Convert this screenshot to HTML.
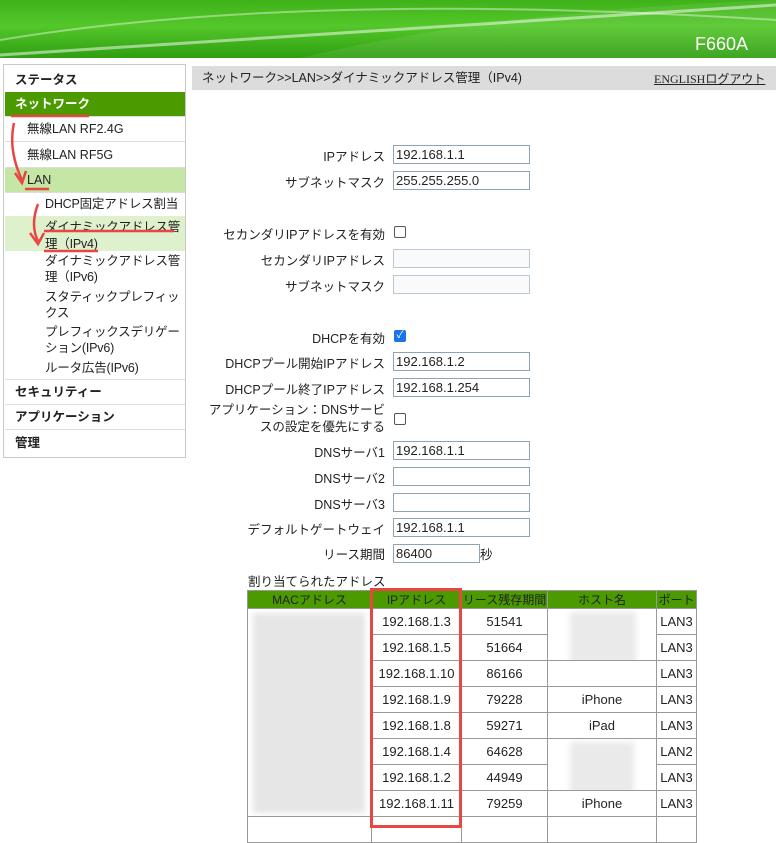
<!DOCTYPE html><html><head><meta charset="utf-8"><style>
*{margin:0;padding:0;box-sizing:border-box}
body{width:776px;height:819px;overflow:hidden;background:#fff;font-family:"Liberation Sans","Noto Sans CJK JP",sans-serif;font-size:12.5px;color:#222;position:relative}
.a{position:absolute}
.hdr{left:0;top:0;width:776px;height:58px;background:linear-gradient(180deg,#3fb21a 0%,#54c72a 45%,#2e9e10 100%)}
.side{left:3px;top:64px;width:183px;height:394px;border:1px solid #c8c8c8;background:#fff}
.it{position:absolute;left:1px;width:180px;border-bottom:1px solid #ddd;padding-left:10px;line-height:24px;white-space:nowrap}
.sub{position:absolute;left:41px;line-height:16px;white-space:nowrap;font-size:12.5px;letter-spacing:-0.2px}
.lbl{position:absolute;right:391px;text-align:right;white-space:nowrap}
.in{position:absolute;left:393px;width:137px;height:19px;border:1px solid #8fa3b5;padding-left:2px;line-height:17px;font-size:13px}
.cb{position:absolute;left:394px;width:12px;height:12px;border:1px solid #555;border-radius:2px}
table{position:absolute;left:247px;top:590px;border-collapse:collapse;font-size:13px;table-layout:fixed;width:449px}
td,th{border:1px solid #999;text-align:center;height:26px;padding:0;white-space:nowrap;overflow:hidden}
th{background:#4a9a00;height:18px;font-weight:normal;color:#222;font-size:12px;line-height:16px}
.bl{background:#eaeaea;filter:blur(3px)}
</style></head><body>
<div class="a hdr"><svg width="776" height="58" style="position:absolute;left:0;top:0"><path d="M0 40 Q300 -10 776 20" stroke="rgba(255,255,255,.4)" stroke-width="2" fill="none"/><path d="M0 55 Q400 30 776 5" stroke="rgba(255,255,255,.5)" stroke-width="3" fill="none"/><path d="M300 58 Q500 10 776 0 L776 58Z" fill="rgba(255,255,255,.08)"/></svg>
<div class="a" style="left:695px;top:34px;color:#fff;font-size:18px">F660A</div></div>
<div class="a side">
<div class="it" style="top:3px;font-weight:bold">ステータス</div>
<div class="it" style="top:27px;height:25px;background:#4a9a00;color:#fff;font-weight:bold">ネットワーク</div>
<div class="it" style="top:52px;padding-left:22px">無線LAN RF2.4G</div>
<div class="it" style="top:78px;padding-left:22px">無線LAN RF5G</div>
<div class="it" style="top:103px;background:#c6e6a6;padding-left:22px">LAN</div>
<div class="sub" style="top:131px">DHCP固定アドレス割当</div>
<div class="a" style="left:1px;top:151px;width:180px;height:35px;background:#dff0cc"></div>
<div class="sub" style="top:154px;line-height:17px">ダイナミックアドレス管<br>理（IPv4)</div>
<div class="sub" style="top:188px">ダイナミックアドレス管<br>理（IPv6)</div>
<div class="sub" style="top:224px">スタティックプレフィッ<br>クス</div>
<div class="sub" style="top:259px">プレフィックスデリゲー<br>ション(IPv6)</div>
<div class="sub" style="top:295px">ルータ広告(IPv6)</div>
<div class="it" style="top:314px;border-top:1px solid #ddd;font-weight:bold">セキュリティー</div>
<div class="it" style="top:340px;font-weight:bold">アプリケーション</div>
<div class="it" style="top:366px;font-weight:bold;border:none">管理</div>
</div>
<svg class="a" style="left:0;top:0" width="200" height="260"><g stroke="#e84545" stroke-width="2.5" fill="none"><path d="M11 116H89"/><path d="M25 189H49"/><path d="M44 231H174"/><path d="M44 251H98"/><path d="M14 123Q8 150 22 180"/><path d="M15 173L22 183L26 171"/><path d="M38 204Q30 225 38 241"/><path d="M30 233L38 244L44 233"/></g></svg>
<div class="a" style="left:192px;top:66px;width:584px;height:24px;background:#dcdcdc;line-height:24px;padding-left:10px">ネットワーク&gt;&gt;LAN&gt;&gt;ダイナミックアドレス管理（IPv4)</div>
<div class="a" style="left:654px;top:70px;font-family:'Liberation Serif',serif;font-size:12px;text-decoration:underline">ENGLISH<span style="font-family:'Liberation Sans','Noto Sans CJK JP',sans-serif">ログアウト</span></div>
<div class="lbl" style="top:146px">IPアドレス</div><div class="in" style="top:145px">192.168.1.1</div>
<div class="lbl" style="top:172px">サブネットマスク</div><div class="in" style="top:171px">255.255.255.0</div>
<div class="lbl" style="top:224px">セカンダリIPアドレスを有効</div><div class="cb" style="top:226px"></div>
<div class="lbl" style="top:250px">セカンダリIPアドレス</div><div class="in" style="top:249px;background:#fafafa;border-color:#b8c8d8"></div>
<div class="lbl" style="top:276px">サブネットマスク</div><div class="in" style="top:275px;background:#fafafa;border-color:#b8c8d8"></div>
<div class="lbl" style="top:328px">DHCPを有効</div><div class="cb" style="top:330px;background:#1a73e8;border-color:#1a73e8;color:#fff;font-size:10px;line-height:10px;text-align:center">✓</div>
<div class="lbl" style="top:353px">DHCPプール開始IPアドレス</div><div class="in" style="top:352px">192.168.1.2</div>
<div class="lbl" style="top:379px">DHCPプール終了IPアドレス</div><div class="in" style="top:378px">192.168.1.254</div>
<div class="lbl" style="top:402px;line-height:17px">アプリケーション：DNSサービ<br>スの設定を優先にする</div><div class="cb" style="top:413px"></div>
<div class="lbl" style="top:442px">DNSサーバ1</div><div class="in" style="top:441px">192.168.1.1</div>
<div class="lbl" style="top:468px">DNSサーバ2</div><div class="in" style="top:467px"></div>
<div class="lbl" style="top:494px">DNSサーバ3</div><div class="in" style="top:493px"></div>
<div class="lbl" style="top:519px">デフォルトゲートウェイ</div><div class="in" style="top:518px">192.168.1.1</div>
<div class="lbl" style="top:544px">リース期間</div><div class="in" style="top:544px;width:87px">86400</div><div class="a" style="left:480px;top:544px">秒</div>
<div class="a" style="left:248px;top:571px">割り当てられたアドレス</div>
<table><colgroup><col style="width:124px"><col style="width:90px"><col style="width:86px"><col style="width:109px"><col style="width:40px"></colgroup>
<tr><th>MACアドレス</th><th>IPアドレス</th><th>リース残存期間</th><th>ホスト名</th><th>ポート</th></tr>
<tr><td rowspan="8" style="position:relative"><div class="a bl" style="left:5px;top:4px;width:112px;height:200px;background:#e6e6e6"></div></td><td>192.168.1.3</td><td>51541</td><td rowspan="2" style="position:relative"><div class="a bl" style="left:22px;top:3px;width:66px;height:52px"></div></td><td>LAN3</td></tr>
<tr><td>192.168.1.5</td><td>51664</td><td>LAN3</td></tr>
<tr><td>192.168.1.10</td><td>86166</td><td></td><td>LAN3</td></tr>
<tr><td>192.168.1.9</td><td>79228</td><td>iPhone</td><td>LAN3</td></tr>
<tr><td>192.168.1.8</td><td>59271</td><td>iPad</td><td>LAN3</td></tr>
<tr><td>192.168.1.4</td><td>64628</td><td rowspan="2" style="position:relative"><div class="a bl" style="left:22px;top:3px;width:64px;height:52px"></div></td><td>LAN2</td></tr>
<tr><td>192.168.1.2</td><td>44949</td><td>LAN3</td></tr>
<tr><td>192.168.1.11</td><td>79259</td><td>iPhone</td><td>LAN3</td></tr>
<tr><td></td><td></td><td></td><td></td><td></td></tr></table>
<div class="a" style="left:370px;top:588px;width:92px;height:240px;border:3px solid #e84545"></div>
</body></html>
